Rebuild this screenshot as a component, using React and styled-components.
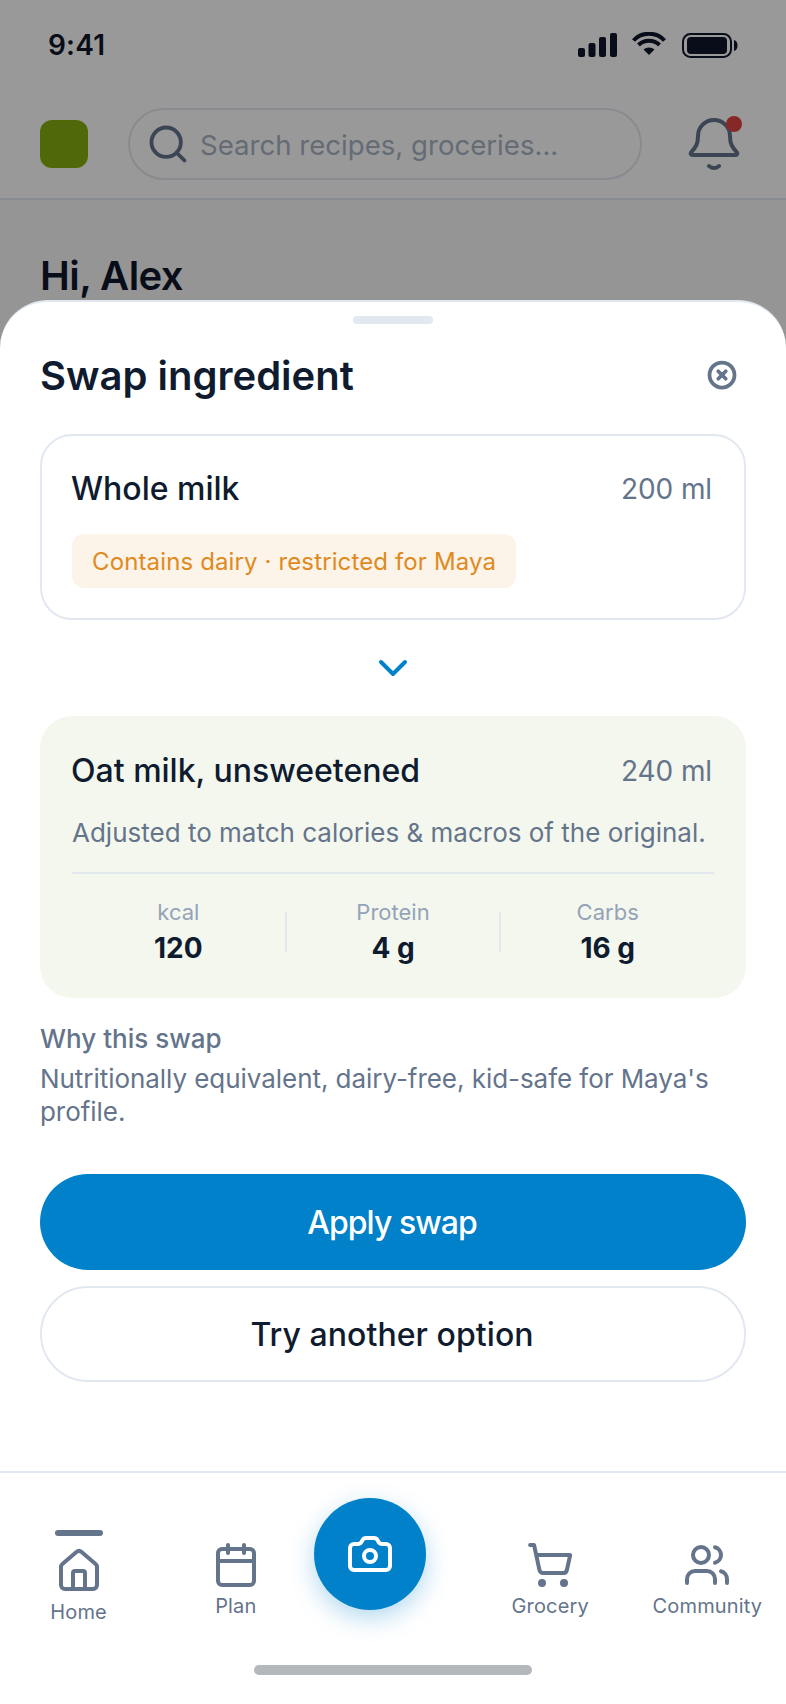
import React from 'react';
import styled, { createGlobalStyle } from 'styled-components';
import { Calendar, Camera, ChevronDown, CircleX, House, Search, ShoppingCart, Users } from 'lucide-react';

const GlobalStyle = createGlobalStyle`
  html, body {
    margin: 0;
    padding: 0;
    background: #fff;
    font-family: Inter, "Liberation Sans", sans-serif;
  }
  * { box-sizing: border-box; }
`;

const Screen = styled.div`
  position: relative;
  width: 786px;
  height: 1704px;
  overflow: hidden;
  background: #f8f8f8;
`;

const StatusBar = styled.div`
  height: 88px;
  padding: 2px 48px 0;
  display: flex;
  align-items: center;
  justify-content: space-between;
  background: #fff;
`;

const Time = styled.span`
  font-size: 28px;
  font-weight: 600;
  letter-spacing: 0.2px;
  color: #0f172a;
`;

const StatusIcons = styled.svg`
  display: block;
  margin-top: 6px;
`;

const Header = styled.header`
  display: flex;
  align-items: center;
  gap: 40px;
  padding: 20px 44px 18px 40px;
  background: #fff;
  border-bottom: 2px solid #e2e8f0;
`;

const Logo = styled.div`
  width: 48px;
  height: 48px;
  border-radius: 12px;
  background: #84b011;
`;

const SearchField = styled.div`
  flex: 1;
  height: 72px;
  padding: 0 20px 0 16px;
  display: flex;
  align-items: center;
  gap: 10px;
  border: 2px solid #e2e8f0;
  border-radius: 36px;
  color: #64748b;
`;

const Placeholder = styled.span`
  padding-top: 2px;
  font-size: 27.6px;
  color: #a8b3c4;
`;

const BellButton = styled.div`
  position: relative;
  width: 56px;
  height: 56px;
  margin-left: 4px;
  color: #64748b;
`;

const BellDot = styled.span`
  position: absolute;
  top: 0;
  right: 0;
  width: 16px;
  height: 16px;
  border-radius: 50%;
  background: #e04343;
`;

const Greeting = styled.h1`
  margin: 52px 0 0 40px;
  font-size: 40px;
  line-height: 48px;
  font-weight: 600;
  letter-spacing: -0.55px;
  color: #0f172a;
`;

const Scrim = styled.div`
  position: absolute;
  inset: 0;
  background: rgba(0, 0, 0, 0.4);
`;

const Sheet = styled.section`
  position: absolute;
  left: 0;
  right: 0;
  top: 300px;
  bottom: 0;
  display: flex;
  flex-direction: column;
  background: #fff;
  border-top: 2px solid #e2e8f0;
  border-radius: 48px 48px 0 0;
`;

const SheetBody = styled.div`
  flex: 1;
  padding: 14px 40px 0;
`;

const Handle = styled.div`
  width: 80px;
  height: 8px;
  margin: 0 auto;
  border-radius: 4px;
  background: #e2e8f0;
`;

const TitleRow = styled.div`
  display: flex;
  align-items: center;
  justify-content: space-between;
  margin-top: 28px;
  padding-right: 9px;
  color: #64748b;
`;

const Title = styled.h2`
  margin: 0;
  font-size: 40px;
  line-height: 48px;
  font-weight: 600;
  color: #0f1b2e;
`;

const CloseIcon = styled(CircleX)`
  margin-bottom: 2px;
`;

const OriginalCard = styled.div`
  margin-top: 34px;
  padding: 31px 30px 30px;
  border: 2px solid #e2e8f0;
  border-radius: 32px;
`;

const IngredientRow = styled.div`
  display: flex;
  align-items: center;
  justify-content: space-between;
`;

const IngredientName = styled.span`
  margin-left: -1px;
  font-size: 32px;
  line-height: 44px;
  font-weight: 500;
  color: #0f1b2e;
`;

const Amount = styled.span`
  margin-right: 2px;
  font-size: 28px;
  line-height: 44px;
  letter-spacing: -0.1px;
  color: #64748b;
`;

const WarningChip = styled.div`
  display: inline-block;
  margin-top: 23px;
  padding: 0 20px;
  height: 54px;
  line-height: 56px;
  border-radius: 12px;
  font-size: 24px;
  letter-spacing: 0.13px;
  color: #e08a1e;
  background: #fcf3e9;
`;

const ArrowSlot = styled.div`
  display: flex;
  justify-content: center;
  margin: 24px 0;
  color: #0081c9;
`;

const SwapCard = styled.div`
  padding: 33px 32px 32px;
  border-radius: 32px;
  background: #f4f7ee;
`;

const SwapNote = styled.p`
  margin: 22px 0 0;
  font-size: 26px;
  line-height: 36px;
  color: #64748b;
`;

const Rule = styled.div`
  height: 2px;
  margin-top: 21px;
  background: #e2e8f0;
`;

const StatRow = styled.div`
  display: flex;
  align-items: center;
  margin-top: 23px;
`;

const Stat = styled.div`
  flex: 1;
  text-align: center;
`;

const StatLabel = styled.div`
  font-size: 22px;
  line-height: 30px;
  color: #94a3b8;
`;

const StatValue = styled.div`
  margin-top: 3px;
  font-size: 28px;
  line-height: 36px;
  font-weight: 700;
  color: #0f1b2e;
`;

const StatDivider = styled.div`
  width: 2px;
  height: 40px;
  background: #e2e8f0;
`;

const WhyTitle = styled.div`
  margin-top: 24px;
  font-size: 26px;
  line-height: 34px;
  font-weight: 500;
  color: #64748b;
`;

const WhyText = styled.p`
  margin: 6px 0 0;
  font-size: 26px;
  line-height: 33px;
  letter-spacing: -0.05px;
  color: #64748b;
`;

const Button = styled.button`
  display: block;
  width: 100%;
  height: 96px;
  padding: 0 2px 0 0;
  border-radius: 48px;
  font-family: inherit;
  font-size: 32px;
  font-weight: 500;
  letter-spacing: ${(p) => (p.$primary ? '-0.95px' : '0.06px')};
  color: ${(p) => (p.$primary ? '#fff' : '#0f1b2e')};
  background: ${(p) => (p.$primary ? '#0081c9' : '#fff')};
  border: ${(p) => (p.$primary ? 'none' : '2px solid #e2e8f0')};
  margin-top: ${(p) => (p.$primary ? '46px' : '16px')};
`;

const NavBar = styled.nav`
  padding: 25px 0 29px;
  border-top: 2px solid #e2e8f0;
  background: #fff;
`;

const NavGrid = styled.div`
  display: grid;
  grid-template-columns: repeat(5, 1fr);
  height: 130px;
`;

const Tab = styled.div`
  display: flex;
  flex-direction: column;
  align-items: center;
  padding-top: ${(p) => (p.$active ? '32px' : '43px')};
  color: #64748b;
`;

const ActiveBar = styled.div`
  width: 48px;
  height: 6px;
  margin-bottom: 11px;
  border-radius: 3px;
  background: #64748b;
`;

const TabLabel = styled.span`
  margin-top: 5px;
  font-size: 20px;
  line-height: 24px;
  letter-spacing: 0.15px;
  font-weight: 400;
`;

const CameraButton = styled.button`
  width: 112px;
  height: 112px;
  padding: 0;
  display: flex;
  align-items: center;
  justify-content: center;
  border: none;
  border-radius: 50%;
  color: #fff;
  background: #0081c9;
  box-shadow: 0 8px 24px rgba(0, 129, 201, 0.3);
`;

const HomeIndicator = styled.div`
  width: 278px;
  height: 10px;
  margin: 37px auto 0;
  border-radius: 5px;
  background: #b4b7bb;
`;

const tabs = [
  { label: 'Home', icon: House, active: true },
  { label: 'Plan', icon: Calendar },
  { camera: true },
  { label: 'Grocery', icon: ShoppingCart },
  { label: 'Community', icon: Users },
];

const stats = [
  { label: 'kcal', value: '120' },
  { label: 'Protein', value: '4 g' },
  { label: 'Carbs', value: '16 g' },
];

function StatusGlyphs() {
  return (
    <StatusIcons width="160" height="32" viewBox="0 0 160 32">
      <g fill="#0f172a">
        <rect x="0" y="16" width="7" height="9" rx="2" />
        <rect x="10.5" y="11" width="7" height="14" rx="2" />
        <rect x="21" y="5" width="7" height="20" rx="2" />
        <rect x="32" y="1" width="7" height="24" rx="2" />
        <path d="M71 23 L65.5 17.6 C68.6 14.8 73.4 14.8 76.5 17.6 Z" />
      </g>
      <g fill="none" stroke="#0f172a" strokeWidth="4">
        <path d="M55.5 8.5 C63.5 -0.5 78.5 -0.5 86.5 8.5" />
        <path d="M60.5 13 C66 7.2 76 7.2 81.5 13" />
      </g>
      <rect x="105" y="2" width="48" height="23" rx="7.5" fill="none" stroke="#0f172a" strokeWidth="2" />
      <rect x="109" y="5" width="40" height="17" rx="4" fill="#0f172a" />
      <path d="M156 8 C158.5 9 159.5 10.5 159.5 13.5 C159.5 16.5 158.5 18 156 19 Z" fill="#0f172a" />
    </StatusIcons>
  );
}

function BellIcon() {
  return (
    <svg width="56" height="56" viewBox="0 0 56 56" fill="none" stroke="currentColor" strokeWidth="4" strokeLinecap="round" strokeLinejoin="round">
      <path d="M12 20a16 16 0 0 1 32 0c0 8 2 11 7 16.5a1.5 1.5 0 0 1-1 2.5H6a1.5 1.5 0 0 1-1-2.5C10 31 12 28 12 20Z" />
      <path d="M23 50q5 4 10 0" />
    </svg>
  );
}

export default function App() {
  return (
    <Screen>
      <GlobalStyle />
      <StatusBar>
        <Time>9:41</Time>
        <StatusGlyphs />
      </StatusBar>
      <Header>
        <Logo />
        <SearchField>
          <Search size={44} strokeWidth={2.1} />
          <Placeholder>Search recipes, groceries...</Placeholder>
        </SearchField>
        <BellButton>
          <BellIcon />
          <BellDot />
        </BellButton>
      </Header>
      <Greeting>Hi, Alex</Greeting>
      <Scrim />
      <Sheet>
        <SheetBody>
          <Handle />
          <TitleRow>
            <Title>Swap ingredient</Title>
            <CloseIcon size={30} strokeWidth={3} />
          </TitleRow>
          <OriginalCard>
            <IngredientRow>
              <IngredientName>Whole milk</IngredientName>
              <Amount>200 ml</Amount>
            </IngredientRow>
            <WarningChip>Contains dairy · restricted for Maya</WarningChip>
          </OriginalCard>
          <ArrowSlot>
            <ChevronDown size={48} strokeWidth={2} />
          </ArrowSlot>
          <SwapCard>
            <IngredientRow>
              <IngredientName>Oat milk, unsweetened</IngredientName>
              <Amount>240 ml</Amount>
            </IngredientRow>
            <SwapNote>Adjusted to match calories &amp; macros of the original.</SwapNote>
            <Rule />
            <StatRow>
              {stats.map((stat, i) => (
                <React.Fragment key={stat.label}>
                  {i > 0 && <StatDivider />}
                  <Stat>
                    <StatLabel>{stat.label}</StatLabel>
                    <StatValue>{stat.value}</StatValue>
                  </Stat>
                </React.Fragment>
              ))}
            </StatRow>
          </SwapCard>
          <WhyTitle>Why this swap</WhyTitle>
          <WhyText>Nutritionally equivalent, dairy-free, kid-safe for Maya's profile.</WhyText>
          <Button $primary>Apply swap</Button>
          <Button>Try another option</Button>
        </SheetBody>
        <NavBar>
          <NavGrid>
            {tabs.map((tab, i) =>
              tab.camera ? (
                <div key={i}>
                  <CameraButton>
                    <Camera size={48} strokeWidth={2} />
                  </CameraButton>
                </div>
              ) : (
                <Tab key={tab.label} $active={tab.active}>
                  {tab.active && <ActiveBar />}
                  <tab.icon size={48} strokeWidth={2} />
                  <TabLabel>{tab.label}</TabLabel>
                </Tab>
              )
            )}
          </NavGrid>
          <HomeIndicator />
        </NavBar>
      </Sheet>
    </Screen>
  );
}
